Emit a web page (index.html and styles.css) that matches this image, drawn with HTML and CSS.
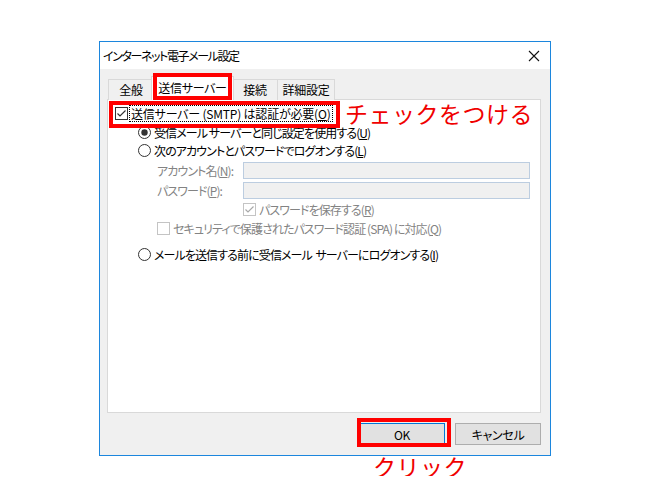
FILE: index.html
```html
<!DOCTYPE html>
<html lang="ja">
<head>
    <meta charset="UTF-8">
    <title>インターネット電子メール設定</title>
    <link rel="stylesheet" href="styles.css">
</head>
<body>
    <div class="dialog">
        <div class="titlebar">
            <span class="title">インターネット電子メール設定</span>
            <svg class="close" width="12" height="12" viewBox="0 0 12 12">
                <path d="M1 1 L11 11 M11 1 L1 11" stroke="#111" stroke-width="1.1" fill="none"/>
            </svg>
        </div>

        <div class="content">
            <div class="tabs">
                <div class="tab">全般</div>
                <div class="tab active">送信サーバー</div>
                <div class="tab">接続</div>
                <div class="tab">詳細設定</div>
            </div>

            <div class="panel">
                <div class="row row-check">
                    <svg class="box" width="13" height="13" viewBox="0 0 13 13">
                        <rect x="0.5" y="0.5" width="12" height="12" fill="#fff" stroke="#333"/>
                        <path d="M2.5 6.5 L5 9 L10.5 3.5" stroke="#333" stroke-width="1.2" fill="none"/>
                    </svg>
                    <span class="focus">送信サーバー (SMTP) は認証が必要(<u>O</u>)</span>
                </div>
                <div class="row row-1 indent-1">
                    <svg class="radio" width="13" height="13" viewBox="0 0 13 13">
                        <circle cx="6.5" cy="6.5" r="6" fill="#fff" stroke="#333"/>
                        <circle cx="6.5" cy="6.5" r="3.2" fill="#333"/>
                    </svg>
                    <span>受信メール サーバーと同じ設定を使用する(<u>U</u>)</span>
                </div>
                <div class="row indent-1">
                    <svg class="radio" width="13" height="13" viewBox="0 0 13 13">
                        <circle cx="6.5" cy="6.5" r="6" fill="#fff" stroke="#333"/>
                    </svg>
                    <span>次のアカウントとパスワードでログオンする(<u>L</u>)</span>
                </div>
                <div class="field">
                    <span class="label disabled">アカウント名(<u>N</u>):</span>
                    <div class="input"></div>
                </div>
                <div class="field">
                    <span class="label disabled">パスワード(<u>P</u>):</span>
                    <div class="input"></div>
                </div>
                <div class="row indent-3">
                    <svg class="box" width="13" height="13" viewBox="0 0 13 13">
                        <rect x="0.5" y="0.5" width="12" height="12" fill="#fff" stroke="#c4c4c4"/>
                        <path d="M2.5 6.5 L5 9 L10.5 3.5" stroke="#a8a8a8" stroke-width="1.2" fill="none"/>
                    </svg>
                    <span class="disabled">パスワードを保存する(<u>R</u>)</span>
                </div>
                <div class="row row-spa indent-2">
                    <svg class="box" width="13" height="13" viewBox="0 0 13 13">
                        <rect x="0.5" y="0.5" width="12" height="12" fill="#fff" stroke="#c4c4c4"/>
                    </svg>
                    <span class="disabled">セキュリティで保護されたパスワード認証 (SPA) に対応(<u>Q</u>)</span>
                </div>
                <div class="row indent-1 row-last">
                    <svg class="radio" width="13" height="13" viewBox="0 0 13 13">
                        <circle cx="6.5" cy="6.5" r="6" fill="#fff" stroke="#333"/>
                    </svg>
                    <span>メールを送信する前に受信メール&nbsp; サーバーにログオンする(<u>I</u>)</span>
                </div>
            </div>

            <div class="buttons">
                <button class="btn default">OK</button>
                <button class="btn">キャンセル</button>
            </div>
        </div>

        <!-- annotations -->
        <div class="mark mark-tab"></div>
        <div class="mark mark-check"></div>
        <div class="mark mark-ok"></div>
        <div class="note note-check">チェックをつける</div>
    </div>
    <div class="note-ok">クリック</div>
</body>
</html>
```

FILE: styles.css
```css
:root {
    --win-bg: #f0f0f0;
    --accent: #1c86dd;
    --line: #d9d9d9;
    --text: #000;
    --muted: #838383;
    --red: #ff0000;
}

body {
    margin: 0;
    padding: 41px 0 0 99px;
    background: #fff;
    font-family: "Noto Sans CJK JP", "Noto Sans", sans-serif;
    font-feature-settings: "palt";
    font-size: 12px;
    letter-spacing: -0.9px;
    color: var(--text);
}

.dialog {
    position: relative;
    box-sizing: border-box;
    width: 452px;
    height: 415px;
    border: 1px solid var(--accent);
    background: var(--win-bg);
}

.titlebar {
    height: 27px;
    background: #fff;
    display: flex;
    align-items: center;
    justify-content: space-between;
    padding: 0 10px 0 3px;
}

.title {
    line-height: 16px;
    letter-spacing: -1.4px;
}

.content {
    padding: 9px 9px 0 7px;
}

.tabs {
    display: flex;
    align-items: flex-end;
    height: 22px;
    padding-left: 1px;
    margin-bottom: -1px;
    position: relative;
}

.tab {
    box-sizing: border-box;
    width: 46px;
    height: 21px;
    line-height: 19px;
    padding: 0;
    text-align: center;
    white-space: nowrap;
    border: 1px solid var(--line);
    border-bottom: none;
    margin-right: -1px;
    background: var(--win-bg);
    letter-spacing: -0.3px;
}

.tab:last-child {
    width: 58px;
}

.tab.active {
    width: 83px;
    height: 24px;
    line-height: 22px;
    background: #fff;
    margin: 0 -2px;
    position: relative;
    z-index: 1;
}

.panel {
    box-sizing: border-box;
    height: 314px;
    background: #fff;
    border: 1px solid var(--line);
    padding: 4px 10px 0 7px;
}

.row {
    display: flex;
    align-items: center;
    gap: 3px;
    height: 19px;
    white-space: nowrap;
}

.row svg {
    flex: none;
}

.row-check {
    letter-spacing: -0.2px;
    gap: 2px;
}

.row-1,
.row-spa {
    height: 18px;
}

.focus {
    outline: 1px dotted #000;
    line-height: 15px;
    padding: 0 1px;
}

.indent-1 { padding-left: 23px; }
.indent-2 { padding-left: 42px; }
.indent-3 { padding-left: 128px; }

.row-last {
    margin-top: 8px;
}

.disabled {
    color: var(--muted);
}

.field {
    display: flex;
    align-items: center;
    height: 20px;
    padding-left: 42px;
}

.label {
    width: 86px;
    flex: none;
    white-space: nowrap;
}

.input {
    flex: 1;
    height: 17px;
    box-sizing: border-box;
    border: 1px solid #bccde0;
    background: var(--win-bg);
}

.buttons {
    display: flex;
    justify-content: flex-end;
    gap: 10px;
    padding-top: 10px;
}

.btn {
    box-sizing: border-box;
    width: 86px;
    height: 22px;
    background: #e1e1e1;
    border: 1px solid #adadad;
    font-family: inherit;
    font-feature-settings: "palt";
    font-size: 12px;
    letter-spacing: -0.3px;
    padding: 0;
    color: #000;
}

.btn.default {
    border-color: #0078d7;
}

.mark {
    position: absolute;
    box-sizing: border-box;
    border: 4px solid var(--red);
    z-index: 2;
}

.mark-tab   { left: 53px;  top: 31px;  width: 79px; height: 27px; }
.mark-check { left: 9px;   top: 59px;  width: 231px; height: 27px; }
.mark-ok    { left: 257px; top: 376px; width: 94px; height: 29px; }

.note,
.note-ok {
    color: #f00000;
    font-size: 23px;
    font-feature-settings: normal;
    letter-spacing: 0.5px;
    white-space: nowrap;
}

.note {
    position: absolute;
    line-height: 28px;
    z-index: 2;
}

.note-check { left: 245px; top: 57px; }

.note-ok {
    line-height: 20px;
    padding-left: 274px;
}
```
